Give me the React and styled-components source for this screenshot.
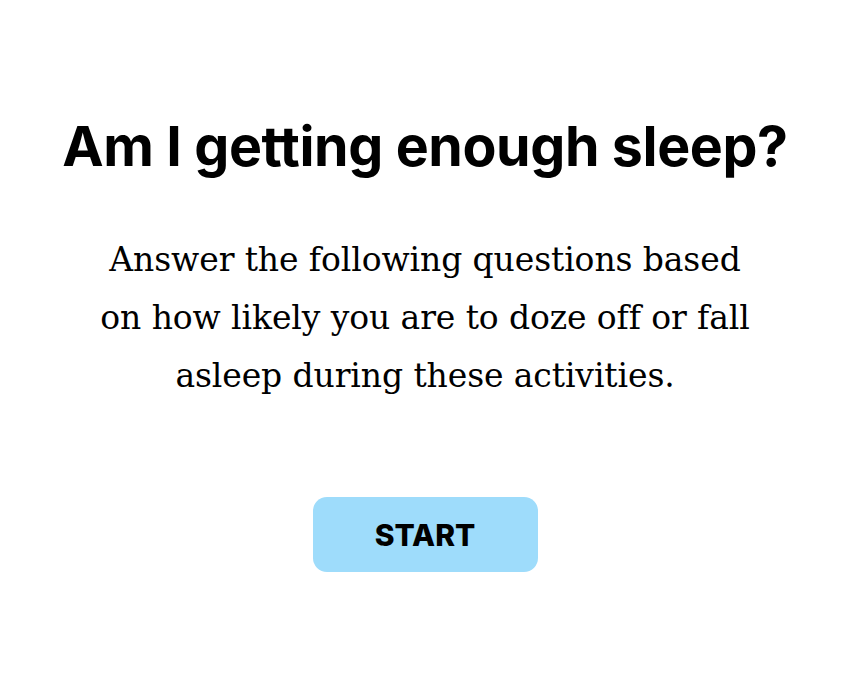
import styled, { createGlobalStyle } from 'styled-components';

const GlobalStyle = createGlobalStyle`
  html, body {
    margin: 0;
    padding: 0;
    background: #ffffff;
  }
`;

const Page = styled.main`
  width: 850px;
  height: 680px;
  display: flex;
  flex-direction: column;
  align-items: center;
  box-sizing: border-box;
  padding-top: 111px;
`;

const Title = styled.h1`
  margin: 0;
  font-family: Inter, 'Liberation Sans', sans-serif;
  font-weight: 700;
  font-size: 55.5px;
  line-height: 70px;
  letter-spacing: -0.4px;
  color: #000;
  text-align: center;
  white-space: nowrap;
`;

const Intro = styled.p`
  margin: 50px 0 0;
  width: 670px;
  font-family: 'DejaVu Serif', 'Liberation Serif', serif;
  font-size: 33px;
  line-height: 58px;
  letter-spacing: -0.1px;
  color: #000;
  text-align: center;
`;

const StartButton = styled.button`
  margin-top: 92px;
  width: 225px;
  height: 75px;
  border: 0;
  border-radius: 14px;
  background-color: #9edcfb;
  font-family: Inter, 'Liberation Sans', sans-serif;
  font-weight: 800;
  font-size: 30px;
  color: #000;
  cursor: pointer;
`;

export default function App() {
  return (
    <>
      <GlobalStyle />
      <Page>
        <Title>Am I getting enough sleep?</Title>
        <Intro>
          Answer the following questions based on how likely you are to doze
          off or fall asleep during these activities.
        </Intro>
        <StartButton>START</StartButton>
      </Page>
    </>
  );
}
